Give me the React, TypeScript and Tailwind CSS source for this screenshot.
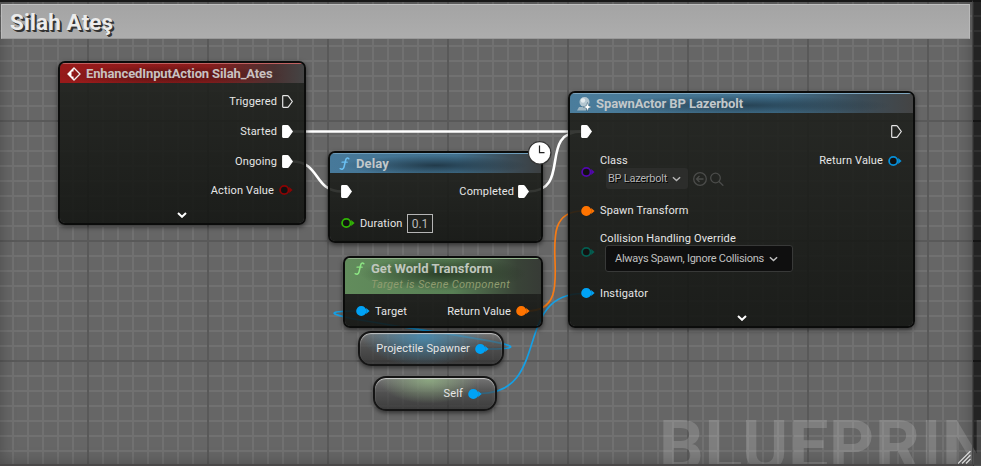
import type { ReactNode } from "react";

function ExecPin({ filled = false }: { filled?: boolean }) {
  return (
    <svg className="block h-[13px] w-[11px] shrink-0" viewBox="0 0 11 13">
      <path
        d="M1.2 .7h4.2c.4 0 .8.2 1 .5L10.3 6.5 6.4 11.8c-.2.3-.6.5-1 .5H1.2c-.3 0-.5-.2-.5-.5V1.2c0-.3.2-.5.5-.5Z"
        fill={filled ? "#fff" : "none"}
        stroke={filled ? "#fff" : "#e4e4e4"}
        strokeWidth="1.2"
      />
    </svg>
  );
}

function DataPin({ color, filled = false }: { color: string; filled?: boolean }) {
  return (
    <svg className="block h-[12px] w-[14px] shrink-0" viewBox="0 0 14 12">
      <path d="M10.2 3 13.600 6l-3.400 3Z" fill={color} />
      <circle cx="5.3" cy="6" r="4.2" fill={filled ? color : "#111"} stroke={color} strokeWidth="1.8" />
    </svg>
  );
}

function Chevron({ className }: { className: string }) {
  return (
    <svg className={`shrink-0 ${className}`} viewBox="0 0 10 6" fill="none" stroke="currentColor">
      <path d="M1 1l4 3.8L9 1" />
    </svg>
  );
}

function Label({ children }: { children: ReactNode }) {
  return <span className="text-[11px] leading-[14px] tracking-[0.14px] whitespace-nowrap text-[#e6e6e6]">{children}</span>;
}

function FunctionIcon({ color }: { color: string }) {
  return (
    <svg className="block h-[13px] w-[11px] shrink-0" viewBox="0 0 11 13" fill="none" stroke={color} strokeLinecap="round">
      <path d="M9.8 1.7C8.600 .5 7.200 1 6.700 3L5 10c-.5 2-1.900 2.700-3.800 1.700" strokeWidth="1.5" />
      <path d="M3 5.200h5.200" strokeWidth="1.2" />
    </svg>
  );
}

function Node({ className, children }: { className: string; children: ReactNode }) {
  return (
    <section
      className={`absolute flex flex-col overflow-hidden rounded-[7px] border-2 border-[#0b0c0b] bg-linear-to-b from-[rgba(30,32,28,.88)] to-[rgba(17,19,16,.88)] bg-clip-padding shadow-[0_2px_5px_rgba(0,0,0,.55)] ${className}`}
    >
      {children}
    </section>
  );
}

function Wires() {
  return (
    <svg className="absolute inset-0 h-[466px] w-[981px]" viewBox="0 0 981 466" fill="none">
      <g stroke="#fff" strokeWidth="2.6">
        <path d="M292 131.500H582" />
        <path d="M292 161.500C321 161.500 313 191.500 342 191.500" />
        <path d="M528 191.500C573 191.500 537 131.500 582 131.500" />
      </g>
      <path stroke="#f47b16" strokeWidth="1.7" d="M527 311C587 311 523 211 583 211" />
      <g stroke="#14a0e6" strokeWidth="1.7">
        <path d="M480 393.500C552 393.500 512 293.500 583 293.500" />
        <path d="M487 349C605 349 238 311 359 311" />
      </g>
    </svg>
  );
}

export default function App() {
  return (
    <main className="relative h-[466px] w-[981px] overflow-hidden bg-[#232323] font-[Roboto,sans-serif]">
      <div className="absolute inset-0 bg-[linear-gradient(90deg,#151515_2px,transparent_2px),linear-gradient(#151515_2px,transparent_2px),linear-gradient(90deg,#303030_2px,transparent_2px),linear-gradient(#303030_2px,transparent_2px)] bg-[size:120px_120px,120px_120px,15px_15px,15px_15px] bg-[position:87px_0,0_0,12px_0,0_0]" />
      <div className="absolute top-0 left-0 h-[466px] w-[973px] bg-[#666] bg-[linear-gradient(90deg,#595959_2px,transparent_2px),linear-gradient(#595959_2px,transparent_2px),linear-gradient(90deg,#717171_2px,transparent_2px),linear-gradient(#717171_2px,transparent_2px)] bg-[size:120px_120px,120px_120px,15px_15px,15px_15px] bg-[position:87px_0,0_0,12px_0,0_0]" />
      <div className="absolute top-[411px] left-[659px] text-[70px] leading-[70px] font-bold tracking-[0.8px] whitespace-nowrap text-white/16">BLUEPRINT</div>
      <div className="absolute top-0 left-0 h-[466px] w-[973px] border-t-2 border-r border-b-2 border-t-[#171717] border-r-[#454545] border-b-[#4a4848] shadow-[inset_0_0_16px_rgba(0,0,0,.28)]" />
      <header className="absolute top-[4px] left-px flex h-[35px] w-[969px] items-center border border-t-[#c0c0c0] border-r-[#b8b8b8] border-b-[#999] border-l-[#bbb] bg-linear-to-b from-[#a4a4a4] to-[#adadad] pl-[8px]">
        <h1 className="text-[22.500px] leading-[26px] font-bold tracking-[0.1px] whitespace-nowrap text-[#ececec] [text-shadow:1px_1px_0_#333,2px_2px_0_#333]">Silah Ateş</h1>
      </header>

      <Wires />

      <Node className="top-[61px] left-[58px] h-[164px] w-[248px]">
        <div className="flex h-[20px] shrink-0 items-center gap-[5px] border-t border-[#c06060] bg-[radial-gradient(ellipse_at_45%_60%,rgba(30,10,10,.55),transparent_60%),linear-gradient(90deg,#981a1a_0%,#8a1c1c_60%,#4a3232_88%,#444_100%)] pl-[7px]">
          <svg className="h-[14px] w-[14px]" viewBox="0 0 14 14">
            <path d="M7 1 13 7 7 13 1 7Z" fill="none" stroke="#eee" strokeWidth="1.300" />
            <path d="M6.500 1 .6 7l5.900 6V9.500H4.500v-5h2Z" fill="#fff" />
          </svg>
          <h2 className="text-[13px] leading-[16px] font-bold tracking-[-0.12px] text-[#c9c1c1]">EnhancedInputAction Silah_Ates</h2>
        </div>
        <div className="flex flex-col pt-[3px] pr-[11px] [&_span]:pt-[2px]">
          <div className="flex h-[30px] items-center justify-end gap-[5px]"><Label>Triggered</Label><ExecPin /></div>
          <div className="flex h-[30px] items-center justify-end gap-[5px]"><Label>Started</Label><ExecPin filled /></div>
          <div className="flex h-[30px] items-center justify-end gap-[5px]"><Label>Ongoing</Label><ExecPin filled /></div>
          <div className="flex h-[28px] items-center justify-end gap-[5px]"><Label>Action Value</Label><DataPin color="#8b0404" /></div>
        </div>
        <Chevron className="mx-auto mt-[8px] h-[6px] w-[10px] stroke-2 text-white" />
      </Node>

      <Node className="top-[151px] left-[328px] h-[92px] w-[215px]">
        <div className="flex h-[20px] shrink-0 items-center gap-[6px] border-t border-[#6d9cba] bg-[radial-gradient(ellipse_at_50%_60%,rgba(20,35,45,.7),transparent_62%),linear-gradient(90deg,#47799a_0%,#41708d_60%,#3c4d58_85%,#3c3f41_100%)] pl-[9px]">
          <FunctionIcon color="#6bc0f3" />
          <h2 className="text-[13px] leading-[16px] font-bold tracking-[0.1px] text-[#c2c8cb]">Delay</h2>
        </div>
        <div className="flex h-[37px] items-center justify-between pr-[12px] pl-[11px]">
          <ExecPin filled />
          <div className="flex items-center gap-[4px]"><Label>Completed</Label><ExecPin filled /></div>
        </div>
        <div className="flex h-[26px] items-center pl-[11px]">
          <DataPin color="#31b405" />
          <div className="ml-[5px] flex w-[47px] items-center pt-[2px]"><Label>Duration</Label></div>
          <div className="flex h-[19px] w-[26px] items-center justify-center border border-[#b5b5b5] pt-px text-[12px] leading-[14px] text-[#b9b9b9]">0.1</div>
        </div>
      </Node>
      <svg className="absolute top-[140px] left-[527px] h-[26px] w-[26px]" viewBox="0 0 26 26">
        <circle cx="12.700" cy="12.800" r="11.200" fill="#fff" stroke="#333" strokeWidth="1.200" />
        <path d="M12.500 5.500v7.200h5" fill="none" stroke="#222" strokeWidth="1.200" />
      </svg>

      <section className="absolute top-[331px] left-[358px] flex h-[35px] w-[146px] items-center justify-end gap-[5px] rounded-[13px] border-2 border-[#151515] bg-[radial-gradient(ellipse_62px_30px_at_45%_10%,rgba(62,145,190,.75),transparent_100%),linear-gradient(rgba(125,125,125,.6),rgba(65,65,65,.65)_45%,rgba(42,42,42,.7))] bg-clip-padding pr-[13px] shadow-[0_2px_4px_rgba(0,0,0,.5),inset_0_1px_1px_rgba(220,220,220,.85)]">
        <Label>Projectile Spawner</Label><DataPin color="#00a2f5" filled />
      </section>
      <section className="absolute top-[376px] left-[373px] flex h-[35px] w-[124px] items-center justify-end gap-[5px] rounded-[13px] border-2 border-[#151515] bg-[radial-gradient(ellipse_50px_24px_at_45%_5%,rgba(150,185,135,.75),transparent_100%),linear-gradient(rgba(125,125,125,.6),rgba(70,70,70,.65)_45%,rgba(42,42,42,.7))] bg-clip-padding pr-[13px] shadow-[0_2px_4px_rgba(0,0,0,.5),inset_0_1px_1px_rgba(220,220,220,.85)]">
        <Label>Self</Label><DataPin color="#00a2f5" filled />
      </section>

      <Node className="top-[256px] left-[343px] h-[72px] w-[200px]">
        <div className="flex h-[36px] shrink-0 gap-[6px] border-t border-[#91b18b] bg-[radial-gradient(ellipse_at_50%_42%,rgba(25,38,23,.72),transparent_60%),linear-gradient(90deg,#628c5c_0%,#587f55_55%,#394337_88%,#373b36_100%)] pt-[2px] pl-[9px]">
          <div className="pt-px"><FunctionIcon color="#8ce683" /></div>
          <div className="flex flex-col">
            <h2 className="text-[13px] leading-[16px] font-bold text-[#c0c7be]">Get World Transform</h2>
            <p className="text-[11px] leading-[15px] tracking-[0.32px] text-[#8f9c6f] italic">Target is Scene Component</p>
          </div>
        </div>
        <div className="flex h-[34px] items-center justify-between pt-[2px] pr-[11px] pl-[11px] [&_span]:pt-px">
          <div className="flex items-center gap-[5px]"><DataPin color="#00a2f5" filled /><Label>Target</Label></div>
          <div className="flex items-center gap-[5px]"><Label>Return Value</Label><DataPin color="#ff7400" filled /></div>
        </div>
      </Node>

      <Node className="top-[91px] left-[568px] h-[237px] w-[347px]">
        <div className="flex h-[20px] shrink-0 items-center gap-[4px] border-t border-[#7ea6bf] bg-[radial-gradient(ellipse_at_50%_60%,rgba(20,35,45,.6),transparent_62%),linear-gradient(90deg,#4b7d9c_0%,#41708d_60%,#3c4d58_85%,#444_100%)] pl-[6px]">
          <svg className="h-[16px] w-[16px]" viewBox="0 0 16 16">
            <path d="M1 14.500 3 11h7v3.500Z" fill="#9fb6c2" />
            <circle cx="8.500" cy="6" r="5" fill="#b4c6d0" />
            <circle cx="7" cy="4.500" r="2.200" fill="#e3ebef" />
            <path d="M11.500 6.500l1.200 3.300 3.300 1.200-3.300 1.200-1.200 3.300-1.200-3.300L7 11l3.300-1.200Z" fill="#fff" stroke="#345a70" strokeWidth=".5" />
          </svg>
          <h2 className="text-[13px] leading-[16px] font-bold tracking-[-0.08px] text-[#c2c8cb]">SpawnActor BP Lazerbolt</h2>
        </div>
        <div className="flex justify-between px-[11px]">
          <div className="flex flex-col">
            <div className="flex h-[37px] items-center"><ExecPin filled /></div>
            <div className="flex h-[43px] items-center gap-[5px]">
              <DataPin color="#5207ad" />
              <div className="flex h-full flex-col pt-[4px]">
                <Label>Class</Label>
                <div className="ml-[6px] flex items-center gap-[5px]">
                  <div className="flex h-[21px] w-[82px] items-center justify-between rounded-[3px] bg-[#2c2d2b] pt-px pr-[7px] pl-[2px] text-[11px] tracking-[-0.26px] whitespace-nowrap text-[#b5b5b5] [text-shadow:1px_1px_0_#000]">
                    BP Lazerbolt<Chevron className="h-[6px] w-[9px] stroke-[1.6]" />
                  </div>
                  <svg className="h-[14px] w-[31px]" viewBox="0 0 31 14" fill="none" stroke="#4b4c4a" strokeWidth="1.300">
                    <circle cx="7" cy="7" r="6.300" /><path d="M10.500 7h-7M6.500 4l-3 3 3 3" />
                    <circle cx="22.500" cy="6" r="4.800" /><path d="M26 9.500l4.300 4.200" />
                  </svg>
                </div>
              </div>
            </div>
            <div className="flex h-[35px] items-center gap-[5px]"><DataPin color="#ff7400" filled /><Label>Spawn Transform</Label></div>
            <div className="flex h-[48px] items-center gap-[5px]">
              <DataPin color="#045e51" />
              <div className="flex h-full flex-col pt-[4px]">
                <Label>Collision Handling Override</Label>
                <div className="-mt-px ml-[5px] flex h-[27px] w-[188px] items-center justify-between rounded-[3px] border border-[#383938] bg-[#0f0f0f] pt-px pr-[14px] pl-[9px] text-[11px] tracking-[-0.26px] whitespace-nowrap text-[#c0c0c0]">
                  Always Spawn, Ignore Collisions<Chevron className="h-[6px] w-[9px] stroke-[1.6]" />
                </div>
              </div>
            </div>
            <div className="flex h-[34px] items-center gap-[5px] [&_span]:pt-[2px]"><DataPin color="#00a2f5" filled /><Label>Instigator</Label></div>
          </div>
          <div className="flex flex-col items-end">
            <div className="flex h-[37px] items-center"><ExecPin /></div>
            <div className="flex h-[21px] items-center gap-[5px]"><Label>Return Value</Label><DataPin color="#078fd8" /></div>
          </div>
        </div>
        <Chevron className="mx-auto mt-[5px] h-[6px] w-[10px] stroke-2 text-white" />
      </Node>

      <svg className="absolute top-[451px] left-[958px] h-[13px] w-[13px]" viewBox="0 0 13 13" stroke="#ddd" strokeWidth="1.200">
        <path d="M0 12.500 12.500 0M4 12.500 12.500 4M8 12.500 12.500 8" />
      </svg>
    </main>
  );
}
